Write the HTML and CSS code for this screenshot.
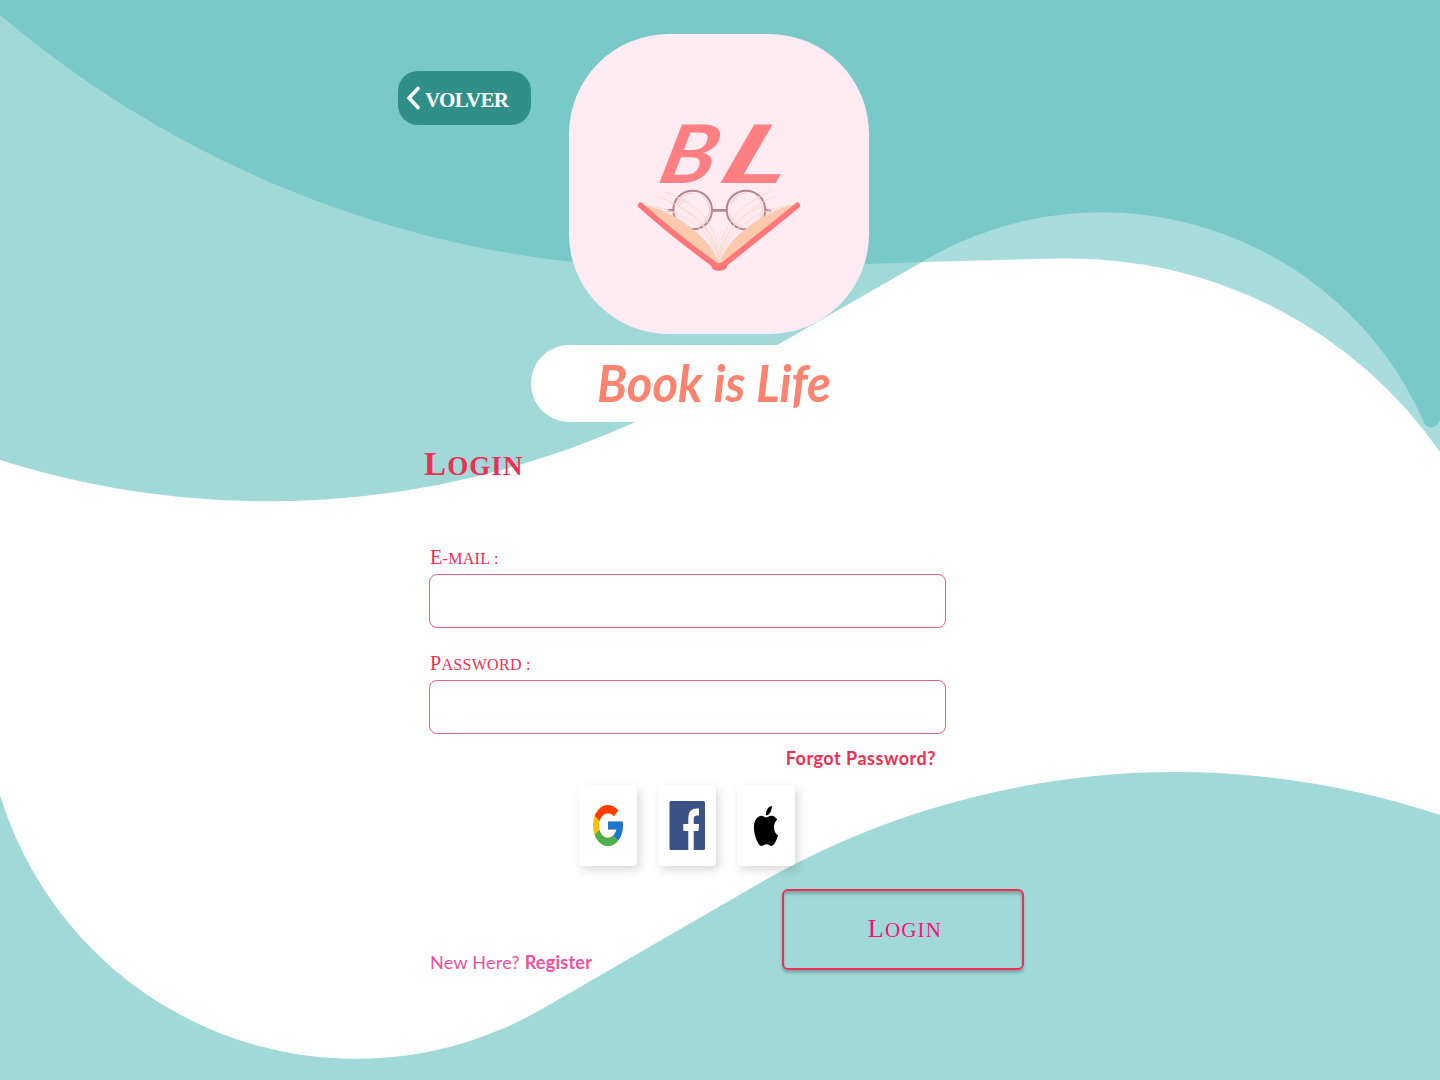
FILE: index.html
```html
<!DOCTYPE html>
<html lang="es">
<head>
<meta charset="utf-8">
<title>Book is Life – Login</title>
<link rel="stylesheet" href="styles.css">
</head>
<body>
<div class="page">
  <svg class="waves" viewBox="0 0 1440 1080" aria-hidden="true">
    <path fill="#a1d9d8" d="M0 0H922V262L713 382A890 890 0 0 1 0 460Z"/>
    <path fill="#a9dddd" d="M922 262L940 200H1440V452A451 451 0 0 0 1060 258.500Z"/>
    <path fill="#79c9c8" d="M0 0H1440V420Q1437 427.500 1431 427.500Q1425 427 1423 420A352 352 0 0 0 926 259.500L922 262L868 264L720 275L572 262A1067 1067 0 0 1 0 15Z"/>
    <path fill="#a1d9d8" d="M0 795A372 372 0 0 0 542 1009L760 883A835 835 0 0 1 1440 815V1080H0Z"/>
  </svg>

  <header class="top">
    <a class="back" href="#">
      <svg class="back-icon" viewBox="0 0 14 24"><path d="M12 2.500L3 12L12 21.500"/></svg>
      <span class="back-text">VOLVER</span>
    </a>
    <div class="logo">
      <svg viewBox="569 34 300 300">
        <g class="monogram">
          <text transform="translate(656 183) skewX(-14)" textLength="55" lengthAdjust="spacingAndGlyphs">B</text>
          <text transform="translate(715 183) skewX(-20)" textLength="68" lengthAdjust="spacingAndGlyphs">L</text>
        </g>
        <g transform="translate(620 110) scale(.33333)" fill="none" stroke-linecap="round">
          <g stroke="#b48892" stroke-width="6">
            <circle cx="218" cy="300" r="58"/>
            <circle cx="378" cy="300" r="58"/>
            <path stroke-width="8" d="M277 301H319M146 301H158M438 301H450"/>
          </g>
          <g stroke="#e2bcc4" stroke-width="2">
            <path d="M169 284L188 266M175 290L194 268M334 280L352 264"/>
            <circle cx="218" cy="300" r="51" stroke-dasharray="60 30"/>
            <circle cx="378" cy="300" r="51" stroke-dasharray="60 30"/>
          </g>
          <path fill="#ffc9ad" d="M85 288C140 302 185 330 217 357C255 385 286 425 297 463C308 425 339 385 377 357C409 330 455 302 510 286L532 288L312 466L297 472L284 466L62 288Z"/>
          <g stroke="#ffd9cc" stroke-width="3">
            <path d="M85 288C150 294 205 325 232 350C270 380 290 420 297 460M114 259C195 293 290 350 297 460M136 245C225 280 298 335 297 460M165 285C240 315 286 370 297 460M510 286C440 294 390 325 362 350C325 380 305 420 297 460M468 256C390 293 305 350 297 460M451 244C370 280 298 335 297 460M430 290C350 315 310 370 297 460"/>
          </g>
          <path stroke="#ff7779" stroke-width="17" stroke-linejoin="round" d="M62 286Q160 374 284 464L297 470L312 463Q425 374 532 286"/>
          <path fill="#ff7779" d="M273 460Q286 466 297 465Q309 466 322 460Q325 482 297 483Q270 482 273 460Z"/>
        </g>
      </svg>
    </div>
  </header>

  <div class="brand">
    <svg viewBox="0 0 377 77"><text x="66" y="57" textLength="234" lengthAdjust="spacingAndGlyphs">Book is Life</text></svg>
  </div>

  <main class="content">
    <h1 class="title">Login</h1>
    <form class="form">
      <label class="label email" for="email">E-mail :</label>
      <input class="input" id="email" type="email">
      <label class="label password" for="password">Password :</label>
      <input class="input" id="password" type="password">
      <a class="forgot" href="#">Forgot Password?</a>
      <div class="socials">
        <a class="social" href="#" aria-label="Google">
          <svg class="google" viewBox="4 4 40 40" preserveAspectRatio="none">
            <path fill="#ffc107" d="M43.611 20.083H42V20H24v8h11.303c-1.649 4.657-6.080 8-11.303 8-6.627 0-12-5.373-12-12s5.373-12 12-12c3.059 0 5.842 1.154 7.961 3.039l5.657-5.657C34.046 6.053 29.268 4 24 4 12.955 4 4 12.955 4 24s8.955 20 20 20 20-8.955 20-20c0-1.341-.138-2.650-.389-3.917z"/>
            <path fill="#ff3d00" d="M6.306 14.691l6.571 4.819C14.655 15.108 18.961 12 24 12c3.059 0 5.842 1.154 7.961 3.039l5.657-5.657C34.046 6.053 29.268 4 24 4 16.318 4 9.656 8.337 6.306 14.691z"/>
            <path fill="#4caf50" d="M24 44c5.166 0 9.860-1.977 13.409-5.192l-6.190-5.238C29.211 35.091 26.715 36 24 36c-5.202 0-9.619-3.317-11.283-7.946l-6.522 5.025C9.505 39.556 16.227 44 24 44z"/>
            <path fill="#1976d2" d="M43.611 20.083H42V20H24v8h11.303c-.792 2.237-2.231 4.166-4.087 5.571l6.193 5.237C36.971 39.205 44 34 44 24c0-1.341-.138-2.650-.389-3.917z"/>
          </svg>
        </a>
        <a class="social" href="#" aria-label="Facebook">
          <svg class="facebook" viewBox="0 0 36 49">
            <rect x=".5" width="35.500" height="49" rx="1.500" fill="#3b5284"/>
            <path fill="#fff" d="M19.300 49V30H14.300V23H19.300V18C19.300 11 22 7.500 28 7.500H30V14.500H28C25.500 14.500 24.700 16 24.700 19V23H30L29.500 30H24.700V49Z"/>
          </svg>
        </a>
        <a class="social" href="#" aria-label="Apple">
          <svg class="apple" viewBox="2.300 0 19.500 24" preserveAspectRatio="none"><path d="M12.152 6.896c-.948 0-2.415-1.078-3.960-1.040-2.040.027-3.910 1.183-4.961 3.014-2.117 3.675-.546 9.103 1.519 12.090 1.013 1.454 2.208 3.090 3.792 3.039 1.520-.065 2.090-.987 3.935-.987 1.831 0 2.350.987 3.960.948 1.637-.026 2.676-1.480 3.676-2.948 1.156-1.688 1.636-3.325 1.662-3.415-.039-.013-3.182-1.221-3.220-4.857-.026-3.040 2.480-4.494 2.597-4.559-1.429-2.090-3.623-2.324-4.390-2.376-2-.156-3.675 1.090-4.610 1.090zM15.530 3.830c.843-1.012 1.400-2.427 1.245-3.830-1.207.052-2.662.805-3.532 1.818-.780.896-1.454 2.338-1.273 3.714 1.338.104 2.715-.688 3.559-1.701"/></svg>
        </a>
      </div>
      <div class="actions">
        <p class="register">New Here? <a href="#">Register</a></p>
        <button class="submit" type="button"><span class="submit-text">Login</span></button>
      </div>
    </form>
  </main>
</div>
</body>
</html>
```

FILE: styles.css
```css
* { box-sizing: border-box; }

body {
  margin: 0;
  background: #fff;
  font-family: Lato, sans-serif;
}

a { color: inherit; text-decoration: none; }

svg { display: block; }

.page {
  position: relative;
  z-index: 0;
  width: 1440px;
  height: 1080px;
  overflow: hidden;
}

.waves {
  position: absolute;
  inset: 0;
  z-index: -1;
  width: 1440px;
  height: 1080px;
}

.top {
  display: flex;
  align-items: flex-start;
  gap: 38px;
  padding: 34px 0 0 398px;
}

.back {
  display: flex;
  align-items: center;
  gap: 5px;
  width: 133px;
  height: 54px;
  margin-top: 37px;
  padding-left: 8px;
  border-radius: 20px;
  background: #318f8a;
  color: #fff;
}

.back-icon {
  width: 14px;
  height: 24px;
  fill: none;
  stroke: #fff;
  stroke-width: 3.600;
  stroke-linecap: round;
  stroke-linejoin: round;
}

.back-text {
  padding-top: 3px;
  font: bold 21px/24px "Liberation Serif", serif;
  letter-spacing: -0.700px;
}

.logo {
  width: 300px;
  height: 300px;
  border-radius: 100px;
  background: #ffebf2;
}

.monogram {
  fill: #ff7f82;
  font: italic 700 81px Lato, sans-serif;
}

.brand {
  width: 377px;
  height: 77px;
  margin: 11px 0 0 531px;
  border-radius: 38px;
  background: #fff;
}

.brand text {
  fill: #fb836f;
  font: italic 700 52px Lato, sans-serif;
}

.content { padding-left: 429px; }

.title {
  height: 40px;
  margin: 22px 0 0 -5px;
  color: #ee2f54;
  font: bold 27px/40px "Liberation Serif", serif;
  letter-spacing: 1.100px;
  text-transform: uppercase;
}

.title::first-letter { font-size: 33px; }

.form {
  display: flex;
  flex-direction: column;
  width: 595px;
  padding-top: 61px;
}

.label {
  height: 24px;
  margin: 0 0 5px 1px;
  color: #ee2f54;
  font: 16px/24px "Liberation Serif", serif;
  letter-spacing: 0.300px;
  text-transform: uppercase;
}

.label::first-letter { font-size: 20px; }

.input {
  width: 517px;
  height: 54px;
  padding: 0 14px;
  border: 1px solid #f2607c;
  border-radius: 8px;
  outline: none;
  background: transparent;
  font: 18px Lato, sans-serif;
}

.password { margin-top: 23px; }

.forgot {
  width: 507px;
  height: 24px;
  margin-top: 12px;
  color: #ee2f54;
  font-size: 18px;
  font-weight: 700;
  line-height: 24px;
  letter-spacing: 0.500px;
  text-align: right;
}

.socials {
  display: flex;
  gap: 21px;
  margin: 15px 0 0 150px;
}

.social {
  display: flex;
  align-items: center;
  justify-content: center;
  width: 58px;
  height: 81px;
  border-radius: 4px;
  background: #fff;
  box-shadow: 3px 4px 10px rgba(0, 0, 0, 0.150);
}

.google { width: 30px; height: 41px; }
.facebook { width: 36px; height: 49px; }
.apple { width: 24px; height: 40px; }

.actions {
  display: flex;
  justify-content: space-between;
  align-items: flex-end;
  margin-top: 23px;
}

.register {
  margin: 0 0 -4px 1px;
  color: #f0509c;
  font-size: 18px;
  font-weight: 400;
  line-height: 24px;
  letter-spacing: 0.250px;
}

.register a { font-weight: 700; }

.submit {
  width: 242px;
  height: 81px;
  padding: 0;
  border: 2px solid #ee2f54;
  border-radius: 6px;
  background: transparent;
  box-shadow: 0 3px 3px rgba(0, 0, 0, 0.220), inset 0 3px 3px rgba(0, 0, 0, 0.220);
  color: #f5127f;
  font: 21px/30px "Liberation Serif", serif;
  letter-spacing: 1.200px;
  text-transform: uppercase;
}

.submit-text { display: inline-block; padding-left: 4px; }
.submit-text::first-letter { font-size: 26px; }
```
